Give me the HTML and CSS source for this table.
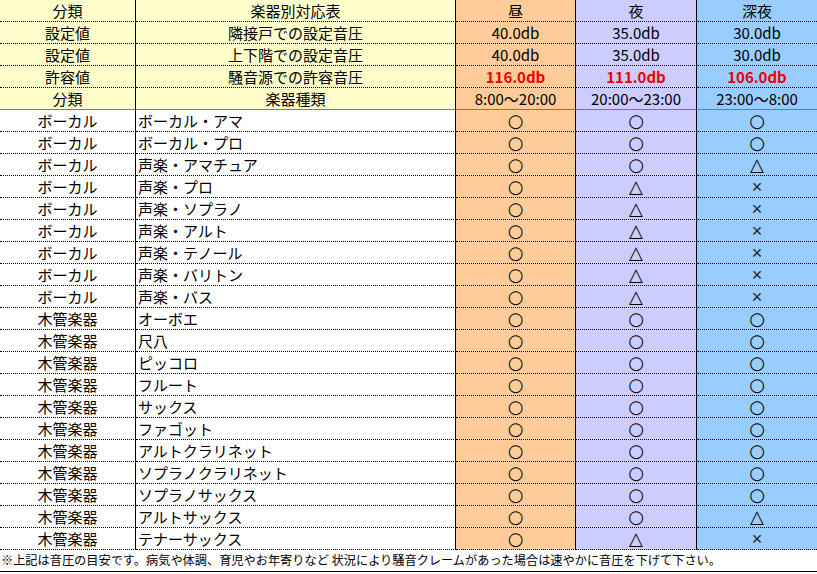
FILE: index.html
```html
<!DOCTYPE html>
<html lang="ja">
<head>
<meta charset="utf-8">
<title>楽器別対応表</title>
<link rel="stylesheet" href="styles.css">
</head>
<body>
<div class="sheet">
  <div class="c y">分類</div><div class="c y">楽器別対応表</div><div class="c o">昼</div><div class="c p">夜</div><div class="c b last">深夜</div>
  <div class="c y">設定値</div><div class="c y">隣接戸での設定音圧</div><div class="c o">40.0db</div><div class="c p">35.0db</div><div class="c b last">30.0db</div>
  <div class="c y">設定値</div><div class="c y">上下階での設定音圧</div><div class="c o">40.0db</div><div class="c p">35.0db</div><div class="c b last">30.0db</div>
  <div class="c y">許容値</div><div class="c y">騒音源での許容音圧</div><div class="c o red">116.0db</div><div class="c p red">111.0db</div><div class="c b last red">106.0db</div>
  <div class="c y hb">分類</div><div class="c y hb">楽器種類</div><div class="c o hb">8:00～20:00</div><div class="c p hb">20:00～23:00</div><div class="c b last hb">23:00～8:00</div>

  <div class="c">ボーカル</div><div class="c l">ボーカル・アマ</div><div class="c o s">○</div><div class="c p s">○</div><div class="c b last s">○</div>
  <div class="c">ボーカル</div><div class="c l">ボーカル・プロ</div><div class="c o s">○</div><div class="c p s">○</div><div class="c b last s">○</div>
  <div class="c">ボーカル</div><div class="c l">声楽・アマチュア</div><div class="c o s">○</div><div class="c p s">○</div><div class="c b last s t">△</div>
  <div class="c">ボーカル</div><div class="c l">声楽・プロ</div><div class="c o s">○</div><div class="c p s t">△</div><div class="c b last s x">×</div>
  <div class="c">ボーカル</div><div class="c l">声楽・ソプラノ</div><div class="c o s">○</div><div class="c p s t">△</div><div class="c b last s x">×</div>
  <div class="c">ボーカル</div><div class="c l">声楽・アルト</div><div class="c o s">○</div><div class="c p s t">△</div><div class="c b last s x">×</div>
  <div class="c">ボーカル</div><div class="c l">声楽・テノール</div><div class="c o s">○</div><div class="c p s t">△</div><div class="c b last s x">×</div>
  <div class="c">ボーカル</div><div class="c l">声楽・バリトン</div><div class="c o s">○</div><div class="c p s t">△</div><div class="c b last s x">×</div>
  <div class="c">ボーカル</div><div class="c l">声楽・バス</div><div class="c o s">○</div><div class="c p s t">△</div><div class="c b last s x">×</div>
  <div class="c">木管楽器</div><div class="c l">オーボエ</div><div class="c o s">○</div><div class="c p s">○</div><div class="c b last s">○</div>
  <div class="c">木管楽器</div><div class="c l">尺八</div><div class="c o s">○</div><div class="c p s">○</div><div class="c b last s">○</div>
  <div class="c">木管楽器</div><div class="c l">ピッコロ</div><div class="c o s">○</div><div class="c p s">○</div><div class="c b last s">○</div>
  <div class="c">木管楽器</div><div class="c l">フルート</div><div class="c o s">○</div><div class="c p s">○</div><div class="c b last s">○</div>
  <div class="c">木管楽器</div><div class="c l">サックス</div><div class="c o s">○</div><div class="c p s">○</div><div class="c b last s">○</div>
  <div class="c">木管楽器</div><div class="c l">ファゴット</div><div class="c o s">○</div><div class="c p s">○</div><div class="c b last s">○</div>
  <div class="c">木管楽器</div><div class="c l">アルトクラリネット</div><div class="c o s">○</div><div class="c p s">○</div><div class="c b last s">○</div>
  <div class="c">木管楽器</div><div class="c l">ソプラノクラリネット</div><div class="c o s">○</div><div class="c p s">○</div><div class="c b last s">○</div>
  <div class="c">木管楽器</div><div class="c l">ソプラノサックス</div><div class="c o s">○</div><div class="c p s">○</div><div class="c b last s">○</div>
  <div class="c">木管楽器</div><div class="c l">アルトサックス</div><div class="c o s">○</div><div class="c p s">○</div><div class="c b last s t">△</div>
  <div class="c">木管楽器</div><div class="c l">テナーサックス</div><div class="c o s">○</div><div class="c p s t">△</div><div class="c b last s x">×</div>

  <div class="note">※上記は音圧の目安です。病気や体調、育児やお年寄りなど 状況により騒音クレームがあった場合は速やかに音圧を下げて下さい。</div>
</div>
</body>
</html>
```

FILE: styles.css
```css
html, body {
  margin: 0;
  padding: 0;
  background: #ffffff;
}

.sheet {
  display: grid;
  grid-template-columns: 136px 320px 120px 121px 120px;
  grid-auto-rows: 22px;
  width: 817px;
  font-family: "Noto Sans CJK JP", "Noto Sans", sans-serif;
  font-size: 15px;
  color: #000000;
}

.c {
  box-sizing: border-box;
  border-right: 1px solid #000000;
  border-bottom: 1px dotted #000000;
  display: flex;
  align-items: center;
  justify-content: center;
  line-height: 20px;
  white-space: nowrap;
}

.c.last {
  border-right: none;
}

.c.l {
  justify-content: flex-start;
  padding-left: 2px;
}

.c.hb {
  border-bottom: 1px solid #7a7a6e;
}

.y { background: #ffffcc; }
.o { background: #ffcc99; }
.p { background: #ccccff; }
.b { background: #99ccff; }

.red {
  color: #ee0000;
  font-weight: 700;
}

.s {
  font-family: "DejaVu Sans", sans-serif;
  font-size: 18px;
  line-height: 20px;
}

.s.t {
  font-size: 18px;
}

.s.x {
  font-family: "Liberation Sans", sans-serif;
  font-size: 18px;
  font-weight: 400;
  color: #222222;
}

.note {
  grid-column: 1 / -1;
  box-sizing: border-box;
  height: 22px;
  border-bottom: 1px solid #000000;
  font-size: 12.2px;
  line-height: 20px;
  padding-left: 1px;
  white-space: nowrap;
}
```
